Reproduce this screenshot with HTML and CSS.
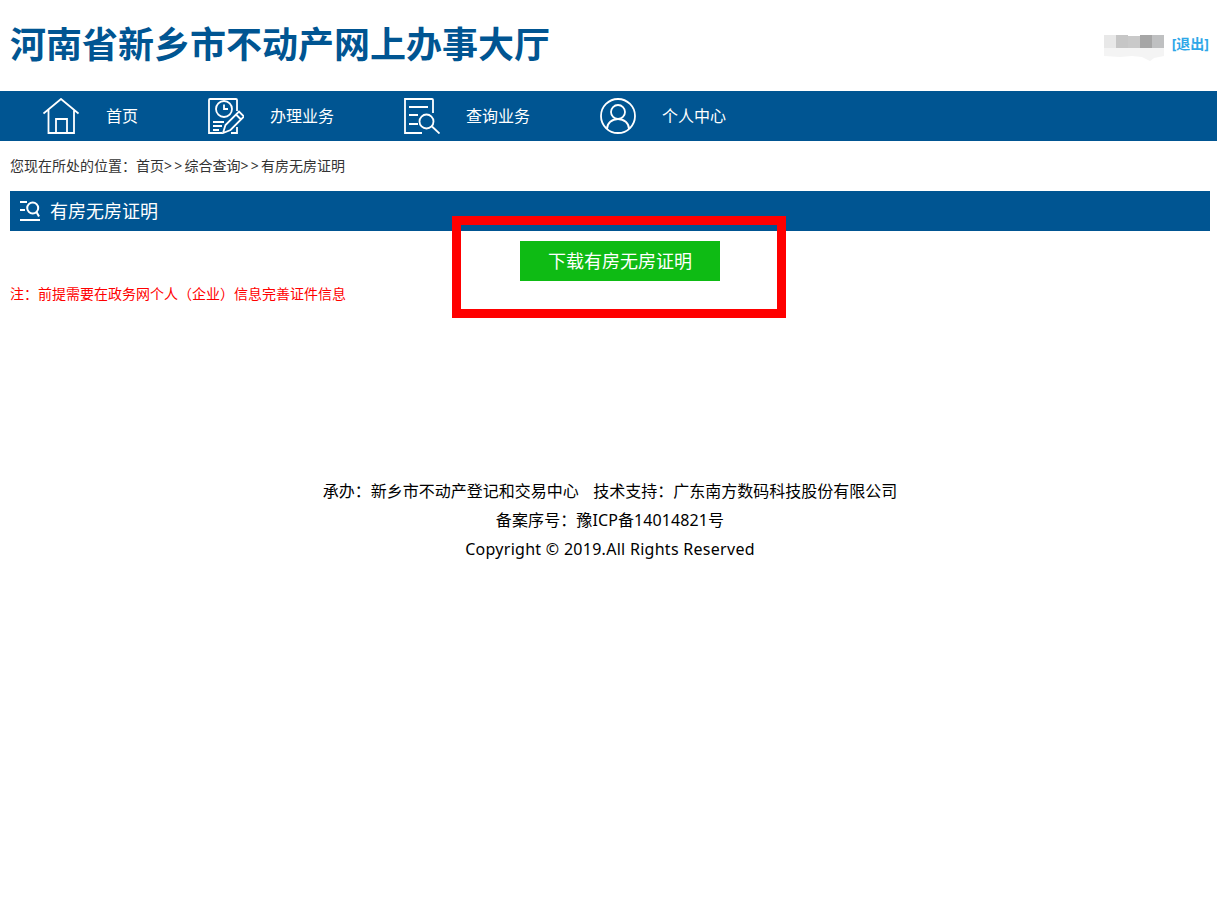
FILE: index.html

```html
<!DOCTYPE html>
<html lang="zh-CN">
<head>
    <meta charset="UTF-8">
    <title>河南省新乡市不动产网上办事大厅</title>
    <link rel="stylesheet" href="styles.css">
</head>
<body>
    <header class="top">
        <h1 class="site-title">河南省新乡市不动产网上办事大厅</h1>
        <div class="user">
            <svg class="user-blur" width="66" height="32" viewBox="0 0 66 32" aria-hidden="true">
                <path fill="#f4f4f4" d="M2 18h60v8l-10 2-4 3-8-4-10-1-12 1-16-1z"/>
                <rect x="2" y="5" width="12" height="13" fill="#e8e8e8"/>
                <rect x="14" y="5" width="12" height="13" fill="#c6c6c6"/>
                <rect x="26" y="6" width="12" height="12" fill="#c9c9c9"/>
                <rect x="38" y="5" width="12" height="13" fill="#a6a6a6"/>
                <rect x="50" y="5" width="12" height="13" fill="#bfc0c1"/>
            </svg>
            <a class="logout" href="#">[退出]</a>
        </div>
    </header>

    <nav class="nav">
        <a class="nav-item nav-home" href="#">
            <svg class="nav-icon" viewBox="0 0 36 36" aria-hidden="true">
                <path d="M.5 15.500 18 1l17.500 14.500M5.500 12v23H31V12M13 35V21h11v14"/>
            </svg>
            <span>首页</span>
        </a>
        <a class="nav-item" href="#">
            <svg class="nav-icon" viewBox="0 0 36 36" aria-hidden="true">
                <path d="M29 13V2a1 1 0 0 0-1-1H2a1 1 0 0 0-1 1v33h13M23 35h6v-6"/>
                <circle cx="16" cy="11" r="8"/>
                <path d="M16 6.500V11h4M5 24h11M5 28h9M5 32h6"/>
                <path d="M15 35l2.500-8L31 13.500l5 5L22.500 32zM28 16.500l5 5"/>
            </svg>
            <span>办理业务</span>
        </a>
        <a class="nav-item" href="#">
            <svg class="nav-icon" viewBox="0 0 36 36" aria-hidden="true">
                <path d="M29 15V2a1 1 0 0 0-1-1H1v34h17M5 9h19M5 17h9M5 26h9"/>
                <circle cx="22.500" cy="23.500" r="7"/>
                <path d="M28 28.500 35.500 35.500"/>
            </svg>
            <span>查询业务</span>
        </a>
        <a class="nav-item" href="#">
            <svg class="nav-icon" viewBox="0 0 36 36" aria-hidden="true">
                <circle cx="18" cy="18" r="17"/>
                <circle cx="18" cy="14" r="7"/>
                <path d="M7 31c0-6 5-10 11-10s11 4 11 10"/>
            </svg>
            <span>个人中心</span>
        </a>
    </nav>

    <main class="content">
        <p class="crumbs">您现在所处的位置：首页<span class="sep">&gt;&gt;</span>综合查询<span class="sep">&gt;&gt;</span>有房无房证明</p>

        <h2 class="panel-title">
            <svg class="panel-icon" viewBox="0 0 20 20" aria-hidden="true">
                <path d="M0 1h7M0 9h5M0 19h20"/>
                <circle cx="12.700" cy="7" r="5.500"/>
                <path d="M16.500 11 19 15.500"/>
            </svg>
            有房无房证明
        </h2>

        <div class="actions">
            <a class="btn-download" href="#">下载有房无房证明</a>
            <div class="mark"></div>
        </div>

        <p class="note">注：前提需要在政务网个人（企业）信息完善证件信息</p>
    </main>

    <footer class="footer">
        <p class="footer-org">承办：新乡市不动产登记和交易中心&nbsp;&nbsp;&nbsp;技术支持：广东南方数码科技股份有限公司</p>
        <p class="footer-icp">备案序号：豫ICP备14014821号</p>
        <p class="footer-copy">Copyright © 2019.All Rights Reserved</p>
    </footer>
</body>
</html>
```

FILE: styles.css

```css
body {
    margin: 0;
    padding: 0;
    background: #fff;
    color: #000;
    font-family: "Noto Sans", "Noto Sans CJK SC", sans-serif;
    font-size: 14px;
}

a {
    text-decoration: none;
}

.top {
    height: 89px;
    padding: 0 8px 2px 10px;
    display: flex;
    justify-content: space-between;
    align-items: center;
}

.site-title {
    margin: 0;
    color: #005592;
    font-size: 36px;
    font-weight: 700;
    line-height: 60px;
}

.user {
    display: flex;
    align-items: center;
}

.user-blur {
    margin: 3px 4px 0 0;
}

.logout {
    margin-bottom: 4px;
    color: #2ea7e8;
    font-size: 14px;
    font-weight: 700;
}

.nav {
    height: 50px;
    padding-left: 43px;
    background: #005592;
    display: flex;
    align-items: center;
}

.nav-item {
    display: flex;
    align-items: center;
    gap: 26px;
    margin-right: 70px;
    color: #fff;
    font-size: 16px;
}

.nav-item span {
    margin-bottom: 2px;
}

.nav-home {
    gap: 27px;
}

.nav-icon {
    width: 36px;
    height: 36px;
    fill: none;
    stroke: #fff;
    stroke-width: 1.800;
}

.content {
    padding: 0 7px 0 10px;
}

.crumbs {
    margin: 0;
    padding-top: 15px;
    height: 35px;
    line-height: 20px;
    color: #333;
}

.sep {
    letter-spacing: 2.250px;
}

.panel-title {
    margin: 0;
    height: 40px;
    padding-left: 10px;
    background: #005592;
    color: #fff;
    font-size: 18px;
    font-weight: 400;
    line-height: 40px;
    display: flex;
    align-items: center;
    gap: 10px;
}

.panel-icon {
    width: 20px;
    height: 20px;
    fill: none;
    stroke: #fff;
    stroke-width: 2;
}

.actions {
    position: relative;
    padding: 10px 0 0 20px;
    display: flex;
    justify-content: center;
}

.btn-download {
    display: block;
    width: 200px;
    height: 40px;
    background: #0ebb14;
    color: #fff;
    font-size: 18px;
    line-height: 40px;
    text-align: center;
}

/* red box drawn over the screenshot */
.mark {
    position: absolute;
    left: 442px;
    top: -15px;
    width: 316px;
    height: 84px;
    border: 9px solid #f00;
}

.note {
    margin: 0;
    padding-top: 3px;
    height: 20px;
    line-height: 20px;
    color: #f00;
}

.footer {
    width: 1200px;
    margin: 173px 0 0 10px;
    font-size: 16px;
    line-height: 29px;
    text-align: center;
}

.footer p {
    margin: 0;
}

.footer-org {
    word-spacing: 0.700px;
}

.footer-icp {
    letter-spacing: 0.100px;
}

.footer-copy {
    letter-spacing: 0.280px;
}
```
